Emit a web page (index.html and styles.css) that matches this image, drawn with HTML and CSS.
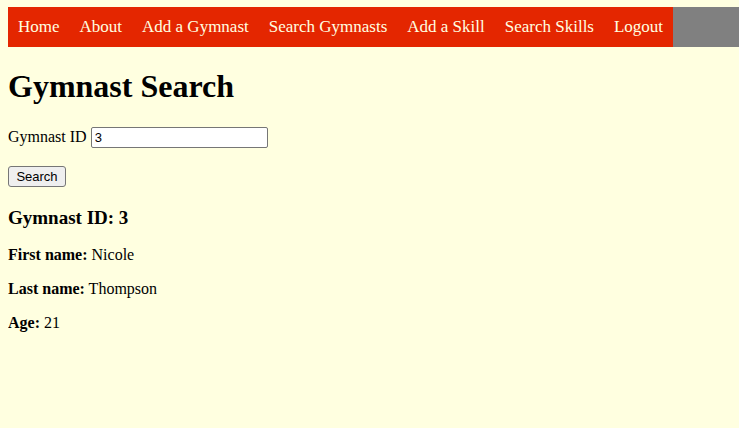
FILE: index.html
```html
<!DOCTYPE html>
<html lang="en">
<head>
<meta charset="utf-8">
<title>Gymnast Search</title>
<link rel="stylesheet" href="styles.css">
</head>
<body>
<nav class="navbar">
  <a href="#">Home</a>
  <a href="#">About</a>
  <a href="#">Add a Gymnast</a>
  <a href="#">Search Gymnasts</a>
  <a href="#">Add a Skill</a>
  <a href="#">Search Skills</a>
  <a href="#">Logout</a>
</nav>
<main>
  <h1>Gymnast Search</h1>
  <form class="search">
    <div><label for="gymnast-id">Gymnast ID</label> <input class="field" id="gymnast-id" type="text" value="3"></div>
    <button class="submit" type="submit">Search</button>
  </form>
  <section class="result">
    <h3>Gymnast ID: 3</h3>
    <p><b>First name:</b> Nicole</p>
    <p><b>Last name:</b> Thompson</p>
    <p><b>Age:</b> 21</p>
  </section>
</main>
</body>
</html>
```
FILE: styles.css
```css
body {
  margin: 7px 0 8px 8px;
  background: #ffffe0;
  color: #000;
  font: 16px/18px "Liberation Serif", "Times New Roman", serif;
}

.navbar {
  display: flex;
  background: #808080;
}

.navbar a {
  padding: 10px;
  background: #e42600;
  color: #ffffe0;
  font-size: 17px;
  line-height: 20px;
  text-decoration: none;
  white-space: nowrap;
}

h1 {
  margin: 21px 0 22px;
  font-size: 32px;
  line-height: 37px;
}

.search {
  display: flex;
  flex-direction: column;
  align-items: flex-start;
  gap: 18px;
}

h3 {
  margin: 20px 0 18px;
  font-size: 19px;
  line-height: 21px;
}

p {
  margin: 16px 0;
}

.field {
  box-sizing: border-box;
  width: 177px;
  height: 21px;
  padding: 1px 3px;
  border: 1px solid #767676;
  border-radius: 2px;
  background: #fff;
  color: #000;
  font: 13px "Liberation Sans", Arial, sans-serif;
}

.submit {
  box-sizing: border-box;
  width: 58px;
  height: 21px;
  padding: 1px 6px;
  border: 1px solid #767676;
  border-radius: 3px;
  background: #efefef;
  color: #000;
  font: 13px "Liberation Sans", Arial, sans-serif;
}
```
